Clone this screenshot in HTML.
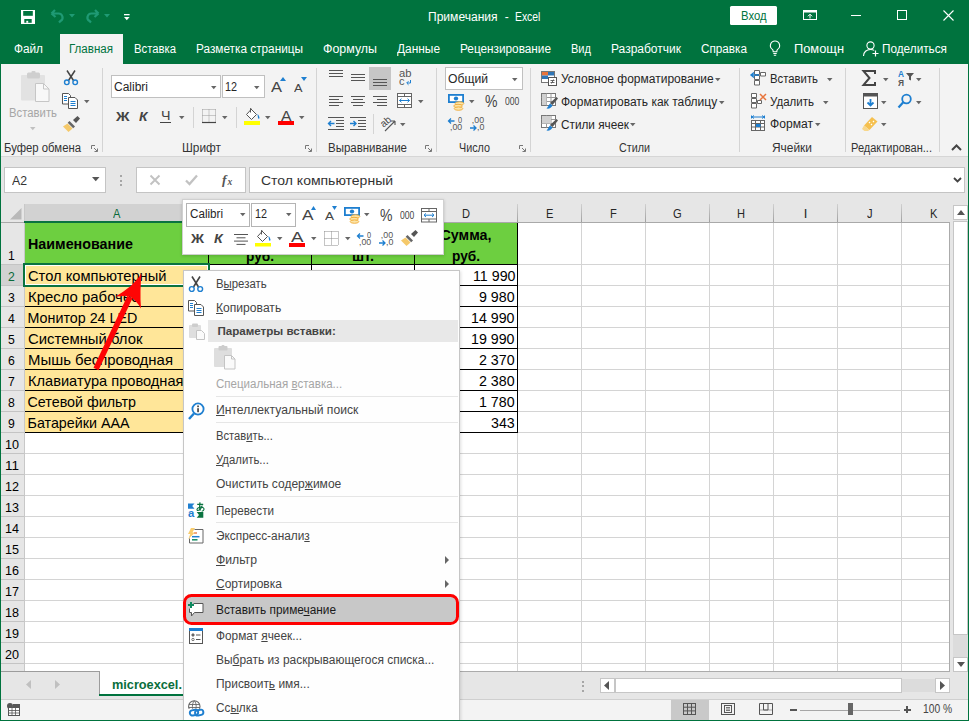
<!DOCTYPE html>
<html><head><meta charset="utf-8"><title>Excel</title>
<style>
html,body{margin:0;padding:0;}
body{width:969px;height:721px;overflow:hidden;position:relative;background:#e6e6e6;font-family:"Liberation Sans",sans-serif;}
#r{position:absolute;left:0;top:0;width:969px;height:721px;overflow:hidden;}
#r div,#r svg,#r span.t{position:absolute;}
#r svg{overflow:visible;}
span.t{white-space:pre;line-height:1;transform-origin:0 50%;}
span.t u{text-decoration:underline;text-underline-offset:1px;}
</style></head><body><div id="r">
<div style="left:0px;top:0px;width:969px;height:64px;background:#00733e;"></div>
<svg style="left:21px;top:10px;" width="14" height="14" viewBox="0 0 14 14"><rect x="0" y="0" width="14" height="14" fill="#fff"/><rect x="2.200" y="1" width="9.600" height="4.800" fill="#00733e"/><rect x="3.300" y="9" width="7.400" height="3.800" fill="#00733e"/><rect x="5.300" y="10.800" width="1.900" height="2" fill="#fff"/></svg>
<svg style="left:50px;top:9px;" width="16" height="15" viewBox="0 0 16 15"><path d="M1.500 4.500l3.500-3.500M1.500 4.500l4 3.500M2 4.500h6.500a4 4 0 0 1 2 7.500l-1.500 1.500" fill="none" stroke="#1f9a74" stroke-width="2.200"/></svg>
<svg style="left:69px;top:14px;" width="6" height="4" viewBox="0 0 6 4"><path d="M0 0h6l-3 3.5z" fill="#1f9a74"/></svg>
<svg style="left:84px;top:9px;" width="16" height="15" viewBox="0 0 16 15"><path d="M14.500 4.500l-3.500-3.500M14.500 4.500l-4 3.500M14 4.500h-6.500a4 4 0 0 0-2 7.500l1.500 1.500" fill="none" stroke="#1f9a74" stroke-width="2.200"/></svg>
<svg style="left:104px;top:14px;" width="6" height="4" viewBox="0 0 6 4"><path d="M0 0h6l-3 3.5z" fill="#1f9a74"/></svg>
<svg style="left:123.8px;top:13.7px;" width="5.6" height="6.5" viewBox="0 0 5.6 6.5"><rect x="0" y="0" width="5.600" height="1.300" fill="#fff"/><path d="M0 2.900h5.600l-2.800 3.300z" fill="#fff"/></svg>
<span class="t" style="left:427.70px;top:11.04px;font-size:12px;color:#fff;transform:scaleX(1.0046);">Примечания</span>
<span class="t" style="left:504.80px;top:11.04px;font-size:12px;color:#fff;">-</span>
<span class="t" style="left:515.00px;top:11.04px;font-size:12px;color:#fff;transform:scaleX(0.8656);">Excel</span>
<div style="left:730px;top:6px;width:47px;height:19px;background:#fff;border-radius:1.500px;"></div>
<span class="t" style="left:741.05px;top:9.50px;font-size:12.4px;color:#00733e;transform:scaleX(0.9090);">Вход</span>
<svg style="left:803px;top:10px;" width="14" height="10" viewBox="0 0 14 10"><rect x="0.5" y="0.5" width="13" height="9" fill="none" stroke="#fff"/><rect x="0.5" y="0.5" width="13" height="2" fill="#fff"/><path d="M7 4.5v4M4.900 6.300L7 4.200l2.100 2.100" fill="none" stroke="#fff" stroke-width="1"/></svg>
<div style="left:851px;top:15px;width:10px;height:1px;background:#fff;"></div>
<div style="left:897px;top:10px;width:10px;height:10px;background:transparent;border:1px solid #fff;box-sizing:border-box;"></div>
<svg style="left:942.5px;top:10px;" width="11" height="11" viewBox="0 0 11 11"><path d="M0.5 0.5l10 10M10.5 0.5l-10 10" stroke="#fff" stroke-width="1.1" fill="none"/></svg>
<div style="left:60px;top:34px;width:63px;height:31px;background:#f3f3f3;"></div>
<span class="t" style="left:14.00px;top:42.84px;font-size:12px;color:#fff;transform:scaleX(0.9830);">Файл</span>
<span class="t" style="left:69.00px;top:42.84px;font-size:12px;color:#00733e;transform:scaleX(0.9633);">Главная</span>
<span class="t" style="left:134.00px;top:42.84px;font-size:12px;color:#fff;transform:scaleX(0.9417);">Вставка</span>
<span class="t" style="left:196.00px;top:42.84px;font-size:12px;color:#fff;transform:scaleX(0.9829);">Разметка страницы</span>
<span class="t" style="left:323.00px;top:42.84px;font-size:12px;color:#fff;transform:scaleX(1.0341);">Формулы</span>
<span class="t" style="left:397.00px;top:42.84px;font-size:12px;color:#fff;transform:scaleX(0.9918);">Данные</span>
<span class="t" style="left:460.00px;top:42.84px;font-size:12px;color:#fff;transform:scaleX(0.9821);">Рецензирование</span>
<span class="t" style="left:571.00px;top:42.84px;font-size:12px;color:#fff;transform:scaleX(0.9213);">Вид</span>
<span class="t" style="left:611.00px;top:42.84px;font-size:12px;color:#fff;">Разработчик</span>
<span class="t" style="left:701.00px;top:42.84px;font-size:12px;color:#fff;transform:scaleX(0.9772);">Справка</span>
<span class="t" style="left:794.00px;top:42.84px;font-size:12px;color:#fff;transform:scaleX(1.0701);">Помощн</span>
<span class="t" style="left:882.00px;top:42.84px;font-size:12px;color:#fff;transform:scaleX(0.9809);">Поделиться</span>
<svg style="left:769px;top:40px;" width="12" height="17" viewBox="0 0 12 17"><path d="M6 1a4.6 4.6 0 0 1 2.6 8.4c-.6.5-.8 1.2-.8 2.3h-3.6c0-1.1-.2-1.8-.8-2.3a4.6 4.6 0 0 1 2.6-8.400z" fill="none" stroke="#fff" stroke-width="1.1"/><path d="M4.3 13.5h3.4M4.8 15.3h2.4" stroke="#fff" stroke-width="1.1"/></svg>
<svg style="left:862px;top:41px;" width="18" height="16" viewBox="0 0 18 16"><circle cx="8.5" cy="4.5" r="3.6" fill="none" stroke="#fff" stroke-width="1.1"/><path d="M1.5 15c0-4 3-6.500 7-6.500 1.500 0 2.700.3 3.700.9" fill="none" stroke="#fff" stroke-width="1.1"/><path d="M13.500 9.500v6M10.500 12.500h6" stroke="#fff" stroke-width="1.2"/></svg>
<div style="left:0px;top:64px;width:969px;height:92px;background:#f3f3f3;"></div>
<div style="left:0px;top:156px;width:969px;height:1px;background:#d6d6d6;"></div>
<svg style="left:21px;top:71px;" width="28" height="31" viewBox="0 0 28 31"><rect x="0" y="4" width="24" height="25.500" rx="1" fill="#e2e2e2"/><rect x="6" y="1.500" width="13" height="6" rx="1.500" fill="#cfcfcf"/><rect x="10.500" y="0" width="4" height="3" rx="1" fill="#cfcfcf"/><path d="M14.500 12.500h8l5.500 5.500v12.500h-13.500z" fill="#f8f8f8" stroke="#c6c6c6" stroke-width="1"/><path d="M22.500 12.500v5.500h5.500" fill="none" stroke="#c6c6c6"/></svg>
<span class="t" style="left:9.00px;top:106.84px;font-size:12px;color:#a6a6a6;transform:scaleX(0.9437);">Вставить</span>
<svg style="left:30.25px;top:126.7px;" width="5.5" height="3.2" viewBox="0 0 5.5 3.2"><path d="M0 0h5.500l-2.750 3.200z" fill="#c0c0c0"/></svg>
<svg style="left:63px;top:70px;" width="16" height="16" viewBox="0 0 16 16"><path d="M4 0.500l6.500 10M12 0.500l-6.500 10" stroke="#444" stroke-width="1.500" fill="none"/><circle cx="3.800" cy="12.300" r="2.300" fill="none" stroke="#1e7fd0" stroke-width="1.400"/><circle cx="12.200" cy="12.300" r="2.300" fill="none" stroke="#1e7fd0" stroke-width="1.400"/></svg>
<svg style="left:62px;top:93px;" width="17" height="16" viewBox="0 0 17 16"><path d="M0.500 0.500h6l2 2v8.500h-8z" fill="#fff" stroke="#555"/><path d="M6.500 4.500h6.500l2.500 2.500v8.500h-9z" fill="#fff" stroke="#555"/><path d="M2 3.500h3M2 5.500h3M2 7.500h3" stroke="#1e7fd0"/><path d="M8.500 8.500h5M8.500 10.500h5M8.500 12.500h5" stroke="#1e7fd0"/></svg>
<svg style="left:84.25px;top:99.7px;" width="5.5" height="3.2" viewBox="0 0 5.5 3.2"><path d="M0 0h5.500l-2.750 3.200z" fill="#666"/></svg>
<svg style="left:63px;top:116px;" width="17" height="16" viewBox="0 0 17 16"><path d="M10 4l4.500-4 2.500 2.500-4 4.500z" fill="#555"/><path d="M6.500 5l5.500 5.500-1.800 1.800-5.500-5.500z" fill="#666"/><path d="M4.500 7.500l5 5-4 3.500-5.500-5.500z" fill="#f5c96a"/></svg>
<span class="t" style="left:4.00px;top:141.84px;font-size:12px;color:#333;transform:scaleX(0.9443);">Буфер обмена</span>
<svg style="left:91px;top:145px;" width="7" height="7" viewBox="0 0 7 7"><path d="M0.500 4V0.500H4" fill="none" stroke="#777" stroke-width="1"/><path d="M3 3l3.200 3.200M6.500 3.500v3h-3" fill="none" stroke="#777" stroke-width="1"/></svg>
<div style="left:102px;top:68px;width:1px;height:84px;background:#d4d4d4;"></div>
<div style="left:111px;top:75px;width:110px;height:23px;background:#fff;border:1px solid #c0c0c0;box-sizing:border-box;"></div>
<span class="t" style="left:114.00px;top:80.84px;font-size:12px;color:#262626;">Calibri</span>
<svg style="left:211.25px;top:85.7px;" width="5.5" height="3.2" viewBox="0 0 5.5 3.2"><path d="M0 0h5.500l-2.750 3.200z" fill="#666"/></svg>
<div style="left:222px;top:75px;width:43px;height:23px;background:#fff;border:1px solid #c0c0c0;box-sizing:border-box;"></div>
<span class="t" style="left:225.00px;top:80.84px;font-size:12px;color:#262626;transform:scaleX(0.8990);">12</span>
<svg style="left:254.25px;top:85.7px;" width="5.5" height="3.2" viewBox="0 0 5.5 3.2"><path d="M0 0h5.500l-2.750 3.200z" fill="#666"/></svg>
<span class="t" style="left:271.00px;top:80.23px;font-size:14.5px;color:#444;transform:scaleX(1.1374);">A</span>
<svg style="left:280px;top:77px;" width="6" height="4" viewBox="0 0 6 4"><path d="M0 4h6l-3-4z" fill="#1e7fd0"/></svg>
<span class="t" style="left:293.50px;top:82.77px;font-size:11.5px;color:#444;transform:scaleX(1.1082);">A</span>
<svg style="left:301px;top:77px;" width="6" height="4" viewBox="0 0 6 4"><path d="M0 0h6l-3 4z" fill="#1e7fd0"/></svg>
<span class="t" style="left:115.50px;top:109.70px;font-size:13px;color:#444;font-weight:bold;transform:scaleX(1.1490);">Ж</span>
<span class="t" style="left:139.00px;top:109.70px;font-size:13px;color:#444;font-weight:bold;font-style:italic;transform:scaleX(1.0636);">К</span>
<span class="t" style="left:160.50px;top:109.20px;font-size:13px;color:#444;transform:scaleX(1.0964);">Ч</span>
<div style="left:160px;top:121.8px;width:11px;height:1px;background:#444;"></div>
<svg style="left:179.25px;top:116.2px;" width="5.5" height="3.2" viewBox="0 0 5.5 3.2"><path d="M0 0h5.500l-2.750 3.200z" fill="#666"/></svg>
<div style="left:193px;top:107px;width:1px;height:21px;background:#d4d4d4;"></div>
<svg style="left:201.5px;top:109px;" width="14" height="14" viewBox="0 0 14 14"><path d="M0.500 0.500h13M0.500 0.500v13M13.500 0.500v13M7 0.500v13M0.500 6.500h13" stroke="#9a9a9a" stroke-dasharray="1 1" fill="none"/><path d="M0 13.500h14" stroke="#444" stroke-width="1.200"/></svg>
<svg style="left:222.25px;top:116.2px;" width="5.5" height="3.2" viewBox="0 0 5.5 3.2"><path d="M0 0h5.500l-2.750 3.200z" fill="#666"/></svg>
<div style="left:236px;top:107px;width:1px;height:21px;background:#d4d4d4;"></div>
<svg style="left:244px;top:107px;" width="17" height="18" viewBox="0 0 17 18"><path d="M6.500 1.500l6 6-5 5-5-5 5-5.500z" fill="#fff" stroke="#555"/><path d="M6.500 1.500v4" stroke="#555"/><path d="M13.500 7c1.500 1.500 2 3 2 4 0 1-1.500 1-1.500 0 0-1-.500-2.500-.500-4z" fill="#1e7fd0"/><rect x="0" y="14" width="16" height="4" fill="#ffff00"/></svg>
<svg style="left:265.25px;top:116.2px;" width="5.5" height="3.2" viewBox="0 0 5.5 3.2"><path d="M0 0h5.500l-2.750 3.200z" fill="#666"/></svg>
<span class="t" style="left:281.00px;top:108.65px;font-size:14px;color:#444;transform:scaleX(1.1245);">A</span>
<div style="left:278px;top:121.3px;width:16px;height:3.7px;background:#f00;"></div>
<svg style="left:299.25px;top:116.2px;" width="5.5" height="3.2" viewBox="0 0 5.5 3.2"><path d="M0 0h5.500l-2.750 3.200z" fill="#666"/></svg>
<span class="t" style="left:182.00px;top:141.84px;font-size:12px;color:#333;transform:scaleX(0.9878);">Шрифт</span>
<svg style="left:305px;top:145px;" width="7" height="7" viewBox="0 0 7 7"><path d="M0.500 4V0.500H4" fill="none" stroke="#777" stroke-width="1"/><path d="M3 3l3.200 3.200M6.500 3.500v3h-3" fill="none" stroke="#777" stroke-width="1"/></svg>
<div style="left:316px;top:68px;width:1px;height:84px;background:#d4d4d4;"></div>
<svg style="left:329px;top:70px;" width="14" height="9" viewBox="0 0 14 9"><rect x="0" y="0" width="14" height="1" fill="#555"/><rect x="0" y="3" width="14" height="1" fill="#555"/><rect x="0" y="6" width="14" height="1" fill="#555"/></svg>
<svg style="left:351px;top:73.7px;" width="14" height="9" viewBox="0 0 14 9"><rect x="0" y="0" width="14" height="1" fill="#555"/><rect x="0" y="3" width="14" height="1" fill="#555"/><rect x="0" y="6" width="14" height="1" fill="#555"/></svg>
<div style="left:369px;top:67px;width:22px;height:23px;background:#c6c6c6;"></div>
<svg style="left:373px;top:78.5px;" width="14" height="9" viewBox="0 0 14 9"><rect x="0" y="0" width="14" height="1" fill="#555"/><rect x="0" y="3" width="14" height="1" fill="#555"/><rect x="0" y="6" width="14" height="1" fill="#555"/></svg>
<span class="t" style="left:398.50px;top:68.19px;font-size:11px;color:#555;transform:scaleX(1.0216);">ab</span>
<span class="t" style="left:399.00px;top:75.69px;font-size:11px;color:#555;">c</span>
<svg style="left:406px;top:80px;" width="5" height="5" viewBox="0 0 5 5"><path d="M4.500 0v3h-3.500M2.500 1.200l-1.800 1.800 1.800 1.800" fill="none" stroke="#1e7fd0" stroke-width="1"/></svg>
<svg style="left:329px;top:96px;" width="14" height="12" viewBox="0 0 14 12"><rect x="0" y="0" width="14" height="1" fill="#555"/><rect x="0" y="3" width="10" height="1" fill="#555"/><rect x="0" y="6" width="14" height="1" fill="#555"/><rect x="0" y="9" width="10" height="1" fill="#555"/></svg>
<svg style="left:351px;top:96px;" width="14" height="12" viewBox="0 0 14 12"><rect x="0.0" y="0" width="14" height="1" fill="#555"/><rect x="2.0" y="3" width="10" height="1" fill="#555"/><rect x="0.0" y="6" width="14" height="1" fill="#555"/><rect x="2.0" y="9" width="10" height="1" fill="#555"/></svg>
<svg style="left:373px;top:96px;" width="14" height="12" viewBox="0 0 14 12"><rect x="0" y="0" width="14" height="1" fill="#555"/><rect x="4" y="3" width="10" height="1" fill="#555"/><rect x="0" y="6" width="14" height="1" fill="#555"/><rect x="4" y="9" width="10" height="1" fill="#555"/></svg>
<svg style="left:397px;top:93px;" width="16" height="16" viewBox="0 0 16 16"><rect x="0.500" y="0.500" width="14" height="14" fill="#fff" stroke="#666"/><path d="M0.500 3.500h14M0.500 11.500h14M7.500 0.500v3M7.500 11.500v3" stroke="#666" fill="none"/><path d="M2.500 7.500h10M4.500 5.700l-2 1.800 2 1.800M10.500 5.700l2 1.800-2 1.800" stroke="#1e7fd0" stroke-width="1" fill="none"/></svg>
<svg style="left:418.25px;top:99.7px;" width="5.5" height="3.2" viewBox="0 0 5.5 3.2"><path d="M0 0h5.500l-2.750 3.200z" fill="#666"/></svg>
<svg style="left:328px;top:117px;" width="16" height="14" viewBox="0 0 16 14"><path d="M0 0.500h16M8 3.500h8M8 6.500h8M8 9.500h8M0 12.500h16" stroke="#555" fill="none"/><path d="M0.500 6.500h6M3 4l-2.500 2.500 2.500 2.500" stroke="#1e7fd0" stroke-width="1.400" fill="none"/></svg>
<svg style="left:350px;top:117px;" width="16" height="14" viewBox="0 0 16 14"><path d="M0 0.500h16M8 3.500h8M8 6.500h8M8 9.500h8M0 12.500h16" stroke="#555" fill="none"/><path d="M0 6.500h6M3.500 4l2.500 2.500-2.500 2.500" stroke="#1e7fd0" stroke-width="1.400" fill="none"/></svg>
<div style="left:373px;top:114px;width:1px;height:20px;background:#d4d4d4;"></div>
<svg style="left:380px;top:114px;" width="18" height="18" viewBox="0 0 18 18"><text x="1" y="11" font-size="10" font-family="Liberation Sans" fill="#444" transform="rotate(-40 6 9)">ab</text><path d="M5 17l10-10M15 7h-4M15 7v4" stroke="#555" stroke-width="1.100" fill="none"/></svg>
<svg style="left:400.25px;top:122.7px;" width="5.5" height="3.2" viewBox="0 0 5.5 3.2"><path d="M0 0h5.500l-2.750 3.200z" fill="#666"/></svg>
<span class="t" style="left:328.00px;top:141.84px;font-size:12px;color:#333;transform:scaleX(0.9564);">Выравнивание</span>
<svg style="left:425px;top:145px;" width="7" height="7" viewBox="0 0 7 7"><path d="M0.500 4V0.500H4" fill="none" stroke="#777" stroke-width="1"/><path d="M3 3l3.200 3.200M6.500 3.500v3h-3" fill="none" stroke="#777" stroke-width="1"/></svg>
<div style="left:436px;top:68px;width:1px;height:84px;background:#d4d4d4;"></div>
<div style="left:445px;top:67px;width:78px;height:23px;background:#fff;border:1px solid #c0c0c0;box-sizing:border-box;"></div>
<span class="t" style="left:448.00px;top:72.84px;font-size:12px;color:#262626;transform:scaleX(1.0130);">Общий</span>
<svg style="left:512.25px;top:77.7px;" width="5.5" height="3.2" viewBox="0 0 5.5 3.2"><path d="M0 0h5.500l-2.750 3.200z" fill="#666"/></svg>
<svg style="left:447.5px;top:93.5px;" width="17" height="17" viewBox="0 0 17 17"><rect x="0" y="0" width="16" height="9" fill="#1e7fd0"/><rect x="1.800" y="1.800" width="12.400" height="5.400" fill="#fff"/><ellipse cx="8" cy="4.500" rx="2.200" ry="1.900" fill="#1e7fd0"/><ellipse cx="11.500" cy="9.500" rx="4.300" ry="1.700" fill="#fbe4a8" stroke="#f0aa35" stroke-width=".9"/><ellipse cx="10" cy="12" rx="4.300" ry="1.700" fill="#fbe4a8" stroke="#f0aa35" stroke-width=".9"/><ellipse cx="10.500" cy="14.600" rx="4.300" ry="1.700" fill="#fbe4a8" stroke="#f0aa35" stroke-width=".9"/></svg>
<svg style="left:469.25px;top:99.7px;" width="5.5" height="3.2" viewBox="0 0 5.5 3.2"><path d="M0 0h5.500l-2.750 3.200z" fill="#666"/></svg>
<span class="t" style="left:484.50px;top:93.03px;font-size:16.5px;color:#444;transform:scaleX(0.8520);">%</span>
<span class="t" style="left:505.00px;top:96.53px;font-size:10px;color:#444;transform:scaleX(0.8570);">000</span>
<span class="t" style="left:458.20px;top:116.25px;font-size:8.8px;color:#555;transform:scaleX(0.8377);">0</span>
<span class="t" style="left:450.00px;top:122.95px;font-size:8.8px;color:#555;">,00</span>
<svg style="left:448px;top:117.5px;" width="7" height="6" viewBox="0 0 7 6"><path d="M0.500 3h6M3 0.500l-2.500 2.500 2.500 2.500" stroke="#1e7fd0" stroke-width="1.300" fill="none"/></svg>
<span class="t" style="left:471.80px;top:116.25px;font-size:8.8px;color:#555;">,00</span>
<span class="t" style="left:476.60px;top:122.95px;font-size:8.8px;color:#555;transform:scaleX(1.0083);">,0</span>
<svg style="left:470px;top:124.7px;" width="7" height="6" viewBox="0 0 7 6"><path d="M0 3h6M3.500 0.500l2.500 2.500-2.500 2.500" stroke="#1e7fd0" stroke-width="1.300" fill="none"/></svg>
<span class="t" style="left:459.00px;top:141.84px;font-size:12px;color:#333;transform:scaleX(0.8982);">Число</span>
<svg style="left:519px;top:145px;" width="7" height="7" viewBox="0 0 7 7"><path d="M0.500 4V0.500H4" fill="none" stroke="#777" stroke-width="1"/><path d="M3 3l3.200 3.200M6.500 3.500v3h-3" fill="none" stroke="#777" stroke-width="1"/></svg>
<div style="left:530px;top:68px;width:1px;height:84px;background:#d4d4d4;"></div>
<svg style="left:541px;top:71px;" width="17" height="16" viewBox="0 0 17 16"><rect x="0.500" y="0.500" width="13" height="11" fill="#fff" stroke="#777"/><rect x="1" y="1" width="6" height="3.500" fill="#e8743b"/><rect x="7" y="1" width="6" height="3.500" fill="#2e75b6"/><rect x="1" y="4.500" width="6" height="3.500" fill="#2e75b6"/><rect x="7.500" y="6.500" width="8" height="8" fill="#fff" stroke="#555"/><path d="M9.500 9.500h4M9.500 11.500h4M12.500 8.500l-2 4" stroke="#555" stroke-width=".9"/></svg>
<span class="t" style="left:561.00px;top:73.34px;font-size:12px;color:#262626;">Условное форматирование</span>
<svg style="left:715.25px;top:77.7px;" width="5.5" height="3.2" viewBox="0 0 5.5 3.2"><path d="M0 0h5.500l-2.750 3.200z" fill="#666"/></svg>
<svg style="left:541px;top:93px;" width="17" height="17" viewBox="0 0 17 17"><rect x="0.500" y="0.500" width="14" height="12" fill="#fff" stroke="#777"/><path d="M0.500 4.500h14M0.500 8.500h14M5.500 0.500v12M10 0.500v12" stroke="#999" fill="none"/><rect x="1" y="1" width="4.500" height="11" fill="#d0d0d0"/><path d="M15.500 4l1.500 1.500-5.500 6.500-2.500-2z" fill="#555"/><path d="M9 10.500l2.500 2c-1 2.500-3.500 3.500-6 3 1.500-1 1.500-3 3.500-5z" fill="#1e7fd0"/></svg>
<span class="t" style="left:561.00px;top:95.84px;font-size:12px;color:#262626;">Форматировать как таблицу</span>
<svg style="left:719.25px;top:100.7px;" width="5.5" height="3.2" viewBox="0 0 5.5 3.2"><path d="M0 0h5.500l-2.750 3.200z" fill="#666"/></svg>
<svg style="left:541px;top:115px;" width="17" height="17" viewBox="0 0 17 17"><rect x="0.500" y="0.500" width="14" height="12" fill="#fff" stroke="#777"/><path d="M0.500 4.500h14M0.500 8.500h14M5.500 0.500v12M10 0.500v12" stroke="#999" fill="none"/><rect x="1" y="1" width="9" height="7.500" fill="#d0d0d0"/><path d="M15.500 4l1.500 1.500-5.500 6.500-2.500-2z" fill="#555"/><path d="M9 10.500l2.500 2c-1 2.500-3.500 3.500-6 3 1.500-1 1.500-3 3.500-5z" fill="#1e7fd0"/></svg>
<span class="t" style="left:561.00px;top:119.04px;font-size:12px;color:#262626;transform:scaleX(0.9819);">Стили ячеек</span>
<svg style="left:630.25px;top:122.7px;" width="5.5" height="3.2" viewBox="0 0 5.5 3.2"><path d="M0 0h5.500l-2.750 3.200z" fill="#666"/></svg>
<span class="t" style="left:619.00px;top:141.84px;font-size:12px;color:#333;transform:scaleX(0.8967);">Стили</span>
<div style="left:739px;top:68px;width:1px;height:84px;background:#d4d4d4;"></div>
<svg style="left:750px;top:70px;" width="17" height="16" viewBox="0 0 17 16"><path d="M4.500 0.500h5v4h-5zM4.500 10.500h5v4.500h-5zM4.500 5.500h5v4h-5z" fill="#fff" stroke="#666"/><path d="M10.500 2.500h5v3.500h-5z" fill="#fff" stroke="#666"/><path d="M1 5h8M4 2.500l-3 2.500 3 2.500" stroke="#1e7fd0" stroke-width="1.400" fill="none"/></svg>
<span class="t" style="left:770.00px;top:73.34px;font-size:12px;color:#262626;transform:scaleX(0.9437);">Вставить</span>
<svg style="left:827.25px;top:77.7px;" width="5.5" height="3.2" viewBox="0 0 5.5 3.2"><path d="M0 0h5.500l-2.750 3.200z" fill="#666"/></svg>
<svg style="left:750px;top:93px;" width="17" height="16" viewBox="0 0 17 16"><path d="M1.500 0.500h5v4h-5zM1.500 10.500h5v4.500h-5zM1.500 5.500h5v4h-5z" fill="#fff" stroke="#666"/><path d="M7.500 7.500h4v3h-4z" fill="#fff" stroke="#666"/><path d="M10 1l6 6M16 1l-6 6" stroke="#e8743b" stroke-width="1.500"/></svg>
<span class="t" style="left:770.00px;top:95.84px;font-size:12px;color:#262626;transform:scaleX(0.9604);">Удалить</span>
<svg style="left:823.25px;top:100.7px;" width="5.5" height="3.2" viewBox="0 0 5.5 3.2"><path d="M0 0h5.500l-2.750 3.200z" fill="#666"/></svg>
<svg style="left:750px;top:115px;" width="17" height="17" viewBox="0 0 17 17"><path d="M1.500 0.500v3M14.500 0.500v3M1.500 2h13M4 0.500l-2 1.500 2 1.500M12 0.500l2 1.500-2 1.500" stroke="#1e7fd0" fill="none"/><rect x="1.500" y="5.500" width="13" height="10" fill="#fff" stroke="#666"/><path d="M1.500 8.500h13M1.500 12h13M5.500 5.500v10M10.500 5.500v10" stroke="#666" fill="none"/><rect x="6" y="9" width="4.500" height="3" fill="#1e7fd0"/></svg>
<span class="t" style="left:770.00px;top:118.34px;font-size:12px;color:#262626;transform:scaleX(1.0087);">Формат</span>
<svg style="left:815.25px;top:122.7px;" width="5.5" height="3.2" viewBox="0 0 5.5 3.2"><path d="M0 0h5.500l-2.750 3.200z" fill="#666"/></svg>
<span class="t" style="left:772.00px;top:141.84px;font-size:12px;color:#333;transform:scaleX(0.9938);">Ячейки</span>
<div style="left:845px;top:68px;width:1px;height:84px;background:#d4d4d4;"></div>
<svg style="left:862px;top:70px;" width="14" height="16" viewBox="0 0 14 16"><path d="M13 4v-3h-11.500l6 7-6 7h11.500v-3" fill="none" stroke="#444" stroke-width="2"/></svg>
<svg style="left:883.25px;top:77.7px;" width="5.5" height="3.2" viewBox="0 0 5.5 3.2"><path d="M0 0h5.500l-2.750 3.200z" fill="#666"/></svg>
<span class="t" style="left:898.00px;top:70.30px;font-size:8.5px;color:#1e7fd0;font-weight:bold;transform:scaleX(0.9774);">A</span>
<span class="t" style="left:898.00px;top:79.30px;font-size:8.5px;color:#555;font-weight:bold;transform:scaleX(0.9821);">Я</span>
<svg style="left:906px;top:73px;" width="8" height="8" viewBox="0 0 8 8"><path d="M0 0h8l-3 3.500v4l-2-1v-3z" fill="#555"/></svg>
<svg style="left:916.25px;top:77.7px;" width="5.5" height="3.2" viewBox="0 0 5.5 3.2"><path d="M0 0h5.500l-2.750 3.200z" fill="#666"/></svg>
<svg style="left:863px;top:93px;" width="15" height="16" viewBox="0 0 15 16"><rect x="0.500" y="0.500" width="14" height="15" fill="#fff" stroke="#555"/><rect x="0.500" y="0.500" width="14" height="3" fill="#555"/><path d="M7.500 6v6.500M4.500 9.500l3 3 3-3" stroke="#1e7fd0" stroke-width="1.800" fill="none"/></svg>
<svg style="left:881.25px;top:100.7px;" width="5.5" height="3.2" viewBox="0 0 5.5 3.2"><path d="M0 0h5.500l-2.750 3.200z" fill="#666"/></svg>
<svg style="left:897px;top:93px;" width="16" height="16" viewBox="0 0 16 16"><circle cx="9.500" cy="6" r="4.300" fill="none" stroke="#1e7fd0" stroke-width="1.800"/><path d="M6.500 9l-5 5.500" stroke="#1e7fd0" stroke-width="2.200"/></svg>
<svg style="left:916.25px;top:100.7px;" width="5.5" height="3.2" viewBox="0 0 5.5 3.2"><path d="M0 0h5.500l-2.750 3.200z" fill="#666"/></svg>
<svg style="left:861px;top:116px;" width="18" height="15" viewBox="0 0 18 15"><path d="M11 1l5.500 4.500-8 8.500-5.500-4.500z" fill="#f5c04f"/><path d="M3 9.500l5.500 4.500-1.500 1h-3.500l-2.500-2z" fill="#f8d78a"/><path d="M8 6l1 1M10 8l1 1M12 5l1 1" stroke="#fff" stroke-width="1.200"/></svg>
<svg style="left:881.25px;top:122.7px;" width="5.5" height="3.2" viewBox="0 0 5.5 3.2"><path d="M0 0h5.500l-2.750 3.200z" fill="#666"/></svg>
<span class="t" style="left:851.00px;top:141.84px;font-size:12px;color:#333;transform:scaleX(0.9200);">Редактирован...</span>
<div style="left:939px;top:68px;width:1px;height:84px;background:#d4d4d4;"></div>
<svg style="left:951px;top:144px;" width="11" height="7" viewBox="0 0 11 7"><path d="M1 6l4.500-4.500 4.500 4.500" fill="none" stroke="#444" stroke-width="2"/></svg>
<div style="left:4px;top:167px;width:102px;height:26px;background:#fff;border:1px solid #c4c4c4;box-sizing:border-box;"></div>
<span class="t" style="left:12.00px;top:174.84px;font-size:12px;color:#333;transform:scaleX(1.0219);">A2</span>
<svg style="left:92px;top:177px;" width="7.5" height="4.3" viewBox="0 0 7.5 4.3"><path d="M0 0h7.500l-3.750 4.300z" fill="#555"/></svg>
<div style="left:120px;top:175px;width:2px;height:2px;background:#a6a6a6;"></div>
<div style="left:120px;top:179.5px;width:2px;height:2px;background:#a6a6a6;"></div>
<div style="left:120px;top:184px;width:2px;height:2px;background:#a6a6a6;"></div>
<div style="left:136px;top:167px;width:110px;height:26px;background:#fff;border:1px solid #c4c4c4;box-sizing:border-box;"></div>
<svg style="left:150px;top:175px;" width="10" height="10" viewBox="0 0 10 10"><path d="M0.500 0.500l9 9M9.500 0.500l-9 9" stroke="#c2c2c2" stroke-width="1.900"/></svg>
<svg style="left:185px;top:175px;" width="13" height="10" viewBox="0 0 13 10"><path d="M1 5.500l3.500 3.500 7.500-8.500" stroke="#c2c2c2" stroke-width="2.300" fill="none"/></svg>
<span class="t" style="left:222px;top:172.500px;font-family:'Liberation Serif',serif;font-style:italic;font-weight:bold;font-size:13.500px;color:#555;">f</span>
<span class="t" style="left:227.500px;top:177.500px;font-family:'Liberation Serif',serif;font-style:italic;font-weight:bold;font-size:9.500px;color:#555;">x</span>
<div style="left:249px;top:167px;width:716px;height:26px;background:#fff;border:1px solid #c4c4c4;box-sizing:border-box;"></div>
<span class="t" style="left:261.00px;top:174.84px;font-size:12px;color:#333;transform:scaleX(1.1657);">Стол компьютерный</span>
<svg style="left:953px;top:176.5px;" width="9" height="6" viewBox="0 0 9 6"><path d="M1 1l3.500 3.500 3.500-3.500" fill="none" stroke="#444" stroke-width="1.900"/></svg>
<div style="left:25px;top:223px;width:926px;height:448px;background:#fff;"></div>
<div style="left:1px;top:204px;width:949px;height:18px;background:#e6e6e6;"></div>
<div style="left:1px;top:222px;width:23px;height:449px;background:#e6e6e6;"></div>
<svg style="left:10px;top:207.5px;" width="11.5" height="11.5" viewBox="0 0 11.5 11.5"><path d="M11.500 0v11.500h-11.500z" fill="#b9b9b9"/></svg>
<div style="left:24px;top:204px;width:1px;height:467px;background:#c8c8c8;"></div>
<div style="left:1px;top:222px;width:949px;height:1px;background:#a9a9a9;"></div>
<div style="left:25px;top:203.5px;width:183px;height:18px;background:#d2d2d2;"></div>
<div style="left:24px;top:221px;width:185px;height:2px;background:#0a7340;"></div>
<div style="left:1px;top:265px;width:22px;height:20px;background:#d2d2d2;"></div>
<span class="t" style="left:112.79px;top:206.91px;font-size:13.1px;color:#0a6a3a;transform:scaleX(0.8500);">A</span>
<div style="left:208px;top:204px;width:1px;height:18px;background:linear-gradient(#d0d0d0,#a0a0a0);"></div>
<span class="t" style="left:256.29px;top:206.91px;font-size:13.1px;color:#262626;transform:scaleX(0.8500);">B</span>
<div style="left:311px;top:204px;width:1px;height:18px;background:linear-gradient(#d0d0d0,#a0a0a0);"></div>
<span class="t" style="left:358.98px;top:206.91px;font-size:13.1px;color:#262626;transform:scaleX(0.8500);">C</span>
<div style="left:414px;top:204px;width:1px;height:18px;background:linear-gradient(#d0d0d0,#a0a0a0);"></div>
<span class="t" style="left:461.98px;top:206.91px;font-size:13.1px;color:#262626;transform:scaleX(0.8500);">D</span>
<div style="left:517px;top:204px;width:1px;height:18px;background:linear-gradient(#d0d0d0,#a0a0a0);"></div>
<span class="t" style="left:545.79px;top:206.91px;font-size:13.1px;color:#262626;transform:scaleX(0.8500);">E</span>
<div style="left:581px;top:204px;width:1px;height:18px;background:linear-gradient(#d0d0d0,#a0a0a0);"></div>
<span class="t" style="left:610.10px;top:206.91px;font-size:13.1px;color:#262626;transform:scaleX(0.8500);">F</span>
<div style="left:645px;top:204px;width:1px;height:18px;background:linear-gradient(#d0d0d0,#a0a0a0);"></div>
<span class="t" style="left:673.17px;top:206.91px;font-size:13.1px;color:#262626;transform:scaleX(0.8500);">G</span>
<div style="left:709px;top:204px;width:1px;height:18px;background:linear-gradient(#d0d0d0,#a0a0a0);"></div>
<span class="t" style="left:737.48px;top:206.91px;font-size:13.1px;color:#262626;transform:scaleX(0.8500);">H</span>
<div style="left:773px;top:204px;width:1px;height:18px;background:linear-gradient(#d0d0d0,#a0a0a0);"></div>
<span class="t" style="left:803.68px;top:206.91px;font-size:13.1px;color:#262626;">I</span>
<div style="left:837px;top:204px;width:1px;height:18px;background:linear-gradient(#d0d0d0,#a0a0a0);"></div>
<span class="t" style="left:866.72px;top:206.91px;font-size:13.1px;color:#262626;transform:scaleX(0.8500);">J</span>
<div style="left:901px;top:204px;width:1px;height:18px;background:linear-gradient(#d0d0d0,#a0a0a0);"></div>
<span class="t" style="left:929.79px;top:206.91px;font-size:13.1px;color:#262626;transform:scaleX(0.8500);">K</span>
<div style="left:517px;top:223px;width:1px;height:448px;background:#d4d4d4;"></div>
<div style="left:581px;top:223px;width:1px;height:448px;background:#d4d4d4;"></div>
<div style="left:645px;top:223px;width:1px;height:448px;background:#d4d4d4;"></div>
<div style="left:709px;top:223px;width:1px;height:448px;background:#d4d4d4;"></div>
<div style="left:773px;top:223px;width:1px;height:448px;background:#d4d4d4;"></div>
<div style="left:837px;top:223px;width:1px;height:448px;background:#d4d4d4;"></div>
<div style="left:901px;top:223px;width:1px;height:448px;background:#d4d4d4;"></div>
<div style="left:208px;top:433px;width:1px;height:238px;background:#d4d4d4;"></div>
<div style="left:311px;top:433px;width:1px;height:238px;background:#d4d4d4;"></div>
<div style="left:414px;top:433px;width:1px;height:238px;background:#d4d4d4;"></div>
<div style="left:518px;top:264px;width:433px;height:1px;background:#d4d4d4;"></div>
<div style="left:518px;top:285px;width:433px;height:1px;background:#d4d4d4;"></div>
<div style="left:518px;top:306px;width:433px;height:1px;background:#d4d4d4;"></div>
<div style="left:518px;top:327px;width:433px;height:1px;background:#d4d4d4;"></div>
<div style="left:518px;top:348px;width:433px;height:1px;background:#d4d4d4;"></div>
<div style="left:518px;top:369px;width:433px;height:1px;background:#d4d4d4;"></div>
<div style="left:518px;top:390px;width:433px;height:1px;background:#d4d4d4;"></div>
<div style="left:518px;top:411px;width:433px;height:1px;background:#d4d4d4;"></div>
<div style="left:518px;top:432px;width:433px;height:1px;background:#d4d4d4;"></div>
<div style="left:25px;top:453px;width:926px;height:1px;background:#d4d4d4;"></div>
<div style="left:25px;top:474px;width:926px;height:1px;background:#d4d4d4;"></div>
<div style="left:25px;top:495px;width:926px;height:1px;background:#d4d4d4;"></div>
<div style="left:25px;top:516px;width:926px;height:1px;background:#d4d4d4;"></div>
<div style="left:25px;top:537px;width:926px;height:1px;background:#d4d4d4;"></div>
<div style="left:25px;top:558px;width:926px;height:1px;background:#d4d4d4;"></div>
<div style="left:25px;top:579px;width:926px;height:1px;background:#d4d4d4;"></div>
<div style="left:25px;top:600px;width:926px;height:1px;background:#d4d4d4;"></div>
<div style="left:25px;top:621px;width:926px;height:1px;background:#d4d4d4;"></div>
<div style="left:25px;top:642px;width:926px;height:1px;background:#d4d4d4;"></div>
<div style="left:25px;top:663px;width:926px;height:1px;background:#d4d4d4;"></div>
<span class="t" style="left:8.40px;top:248.94px;font-size:13.3px;color:#000;transform:scaleX(0.9193);">1</span>
<div style="left:1px;top:264px;width:23px;height:1px;background:#c4c4c4;"></div>
<span class="t" style="left:8.40px;top:269.94px;font-size:13.3px;color:#0a6a3a;transform:scaleX(0.9193);">2</span>
<div style="left:1px;top:285px;width:23px;height:1px;background:#c4c4c4;"></div>
<span class="t" style="left:8.40px;top:290.94px;font-size:13.3px;color:#000;transform:scaleX(0.9193);">3</span>
<div style="left:1px;top:306px;width:23px;height:1px;background:#c4c4c4;"></div>
<span class="t" style="left:8.40px;top:311.94px;font-size:13.3px;color:#000;transform:scaleX(0.9193);">4</span>
<div style="left:1px;top:327px;width:23px;height:1px;background:#c4c4c4;"></div>
<span class="t" style="left:8.40px;top:332.94px;font-size:13.3px;color:#000;transform:scaleX(0.9193);">5</span>
<div style="left:1px;top:348px;width:23px;height:1px;background:#c4c4c4;"></div>
<span class="t" style="left:8.40px;top:353.94px;font-size:13.3px;color:#000;transform:scaleX(0.9193);">6</span>
<div style="left:1px;top:369px;width:23px;height:1px;background:#c4c4c4;"></div>
<span class="t" style="left:8.40px;top:374.94px;font-size:13.3px;color:#000;transform:scaleX(0.9193);">7</span>
<div style="left:1px;top:390px;width:23px;height:1px;background:#c4c4c4;"></div>
<span class="t" style="left:8.40px;top:395.94px;font-size:13.3px;color:#000;transform:scaleX(0.9193);">8</span>
<div style="left:1px;top:411px;width:23px;height:1px;background:#c4c4c4;"></div>
<span class="t" style="left:8.40px;top:416.94px;font-size:13.3px;color:#000;transform:scaleX(0.9193);">9</span>
<div style="left:1px;top:432px;width:23px;height:1px;background:#c4c4c4;"></div>
<span class="t" style="left:4.90px;top:437.94px;font-size:13.3px;color:#000;transform:scaleX(0.9463);">10</span>
<div style="left:1px;top:453px;width:23px;height:1px;background:#c4c4c4;"></div>
<span class="t" style="left:4.90px;top:458.94px;font-size:13.3px;color:#000;transform:scaleX(1.0140);">11</span>
<div style="left:1px;top:474px;width:23px;height:1px;background:#c4c4c4;"></div>
<span class="t" style="left:4.90px;top:479.94px;font-size:13.3px;color:#000;transform:scaleX(0.9463);">12</span>
<div style="left:1px;top:495px;width:23px;height:1px;background:#c4c4c4;"></div>
<span class="t" style="left:4.90px;top:500.94px;font-size:13.3px;color:#000;transform:scaleX(0.9463);">13</span>
<div style="left:1px;top:516px;width:23px;height:1px;background:#c4c4c4;"></div>
<span class="t" style="left:4.90px;top:521.94px;font-size:13.3px;color:#000;transform:scaleX(0.9463);">14</span>
<div style="left:1px;top:537px;width:23px;height:1px;background:#c4c4c4;"></div>
<span class="t" style="left:4.90px;top:542.94px;font-size:13.3px;color:#000;transform:scaleX(0.9463);">15</span>
<div style="left:1px;top:558px;width:23px;height:1px;background:#c4c4c4;"></div>
<span class="t" style="left:4.90px;top:563.94px;font-size:13.3px;color:#000;transform:scaleX(0.9463);">16</span>
<div style="left:1px;top:579px;width:23px;height:1px;background:#c4c4c4;"></div>
<span class="t" style="left:4.90px;top:584.94px;font-size:13.3px;color:#000;transform:scaleX(0.9463);">17</span>
<div style="left:1px;top:600px;width:23px;height:1px;background:#c4c4c4;"></div>
<span class="t" style="left:4.90px;top:605.94px;font-size:13.3px;color:#000;transform:scaleX(0.9463);">18</span>
<div style="left:1px;top:621px;width:23px;height:1px;background:#c4c4c4;"></div>
<span class="t" style="left:4.90px;top:626.94px;font-size:13.3px;color:#000;transform:scaleX(0.9463);">19</span>
<div style="left:1px;top:642px;width:23px;height:1px;background:#c4c4c4;"></div>
<span class="t" style="left:4.90px;top:647.94px;font-size:13.3px;color:#000;transform:scaleX(0.9463);">20</span>
<div style="left:1px;top:663px;width:23px;height:1px;background:#c4c4c4;"></div>
<div style="left:25px;top:223px;width:493px;height:41px;background:#6dcf40;"></div>
<div style="left:25px;top:265px;width:183px;height:168px;background:#ffe699;"></div>
<div style="left:208px;top:223px;width:1px;height:210px;background:#000;"></div>
<div style="left:311px;top:223px;width:1px;height:210px;background:#000;"></div>
<div style="left:414px;top:223px;width:1px;height:210px;background:#000;"></div>
<div style="left:517px;top:223px;width:1px;height:210px;background:#000;"></div>
<div style="left:25px;top:264px;width:493px;height:1px;background:#000;"></div>
<div style="left:25px;top:285px;width:493px;height:1px;background:#000;"></div>
<div style="left:25px;top:306px;width:493px;height:1px;background:#000;"></div>
<div style="left:25px;top:327px;width:493px;height:1px;background:#000;"></div>
<div style="left:25px;top:348px;width:493px;height:1px;background:#000;"></div>
<div style="left:25px;top:369px;width:493px;height:1px;background:#000;"></div>
<div style="left:25px;top:390px;width:493px;height:1px;background:#000;"></div>
<div style="left:25px;top:411px;width:493px;height:1px;background:#000;"></div>
<div style="left:25px;top:432px;width:493px;height:1px;background:#000;"></div>
<span class="t" style="left:28.00px;top:236.90px;font-size:14.3px;color:#000;font-weight:bold;">Наименование</span>
<span class="t" style="left:440.50px;top:227.90px;font-size:14.3px;color:#000;font-weight:bold;">Сумма,</span>
<span class="t" style="left:452.00px;top:248.90px;font-size:14.3px;color:#000;font-weight:bold;transform:scaleX(0.9554);">руб.</span>
<span class="t" style="left:246.00px;top:248.90px;font-size:14.3px;color:#000;font-weight:bold;transform:scaleX(0.9554);">руб.</span>
<span class="t" style="left:352.00px;top:248.90px;font-size:14.3px;color:#000;font-weight:bold;transform:scaleX(1.0167);">шт.</span>
<span class="t" style="left:27.50px;top:268.90px;font-size:14.3px;color:#000;transform:scaleX(1.0264);">Стол компьютерный</span>
<span class="t" style="left:472.54px;top:268.90px;font-size:14.3px;color:#000;transform:scaleX(0.9950);">11 990</span>
<span class="t" style="left:27.50px;top:289.90px;font-size:14.3px;color:#000;transform:scaleX(1.0429);">Кресло рабочее</span>
<span class="t" style="left:479.39px;top:289.90px;font-size:14.3px;color:#000;transform:scaleX(0.9950);">9 980</span>
<span class="t" style="left:27.50px;top:310.90px;font-size:14.3px;color:#000;">Монитор 24 LED</span>
<span class="t" style="left:471.48px;top:310.90px;font-size:14.3px;color:#000;transform:scaleX(0.9950);">14 990</span>
<span class="t" style="left:27.50px;top:331.90px;font-size:14.3px;color:#000;transform:scaleX(1.0405);">Системный блок</span>
<span class="t" style="left:471.48px;top:331.90px;font-size:14.3px;color:#000;transform:scaleX(0.9950);">19 990</span>
<span class="t" style="left:27.50px;top:352.90px;font-size:14.3px;color:#000;transform:scaleX(1.0440);">Мышь беспроводная</span>
<span class="t" style="left:479.39px;top:352.90px;font-size:14.3px;color:#000;transform:scaleX(0.9950);">2 370</span>
<span class="t" style="left:27.50px;top:373.90px;font-size:14.3px;color:#000;transform:scaleX(1.0224);">Клавиатура проводная</span>
<span class="t" style="left:479.39px;top:373.90px;font-size:14.3px;color:#000;transform:scaleX(0.9950);">2 380</span>
<span class="t" style="left:27.50px;top:394.90px;font-size:14.3px;color:#000;">Сетевой фильтр</span>
<span class="t" style="left:479.39px;top:394.90px;font-size:14.3px;color:#000;transform:scaleX(0.9950);">1 780</span>
<span class="t" style="left:27.50px;top:415.90px;font-size:14.3px;color:#000;">Батарейки ААА</span>
<span class="t" style="left:491.26px;top:415.90px;font-size:14.3px;color:#000;transform:scaleX(0.9950);">343</span>
<div style="left:23px;top:263px;width:187px;height:24px;background:#fff;"></div>
<div style="left:26px;top:266px;width:181px;height:18px;background:#ffe699;"></div>
<span class="t" style="left:27.50px;top:268.90px;font-size:14.3px;color:#000;transform:scaleX(1.0264);">Стол компьютерный</span>
<div style="left:23px;top:263px;width:187px;height:2px;background:#0a7340;"></div>
<div style="left:23px;top:285px;width:187px;height:2px;background:#0a7340;"></div>
<div style="left:23px;top:263px;width:2px;height:24px;background:#0a7340;"></div>
<div style="left:208px;top:263px;width:2px;height:24px;background:#0a7340;"></div>
<div style="left:950px;top:204px;width:18px;height:467px;background:#e6e6e6;"></div>
<div style="left:953px;top:205px;width:15px;height:15px;background:#fff;border:1px solid #c6c6c6;box-sizing:border-box;"></div>
<svg style="left:956.5px;top:210px;" width="8" height="5" viewBox="0 0 8 5"><path d="M0 5h8l-4-5z" fill="#555"/></svg>
<div style="left:953px;top:221px;width:15px;height:414px;background:#fff;border:1px solid #c6c6c6;box-sizing:border-box;"></div>
<div style="left:949px;top:222px;width:1px;height:450px;background:#ababab;"></div>
<div style="left:460px;top:671px;width:490px;height:1px;background:#ababab;"></div>
<div style="left:2px;top:671px;width:98px;height:28px;background:#e6e6e6;"></div>
<div style="left:100px;top:671px;width:360px;height:23px;background:#fff;"></div>
<div style="left:0px;top:671px;width:100px;height:1px;background:#9c9c9c;"></div>
<div style="left:99px;top:671px;width:1px;height:23px;background:#9c9c9c;"></div>
<div style="left:99px;top:694px;width:361px;height:2px;background:#00733e;"></div>
<svg style="left:26px;top:680px;" width="5" height="9" viewBox="0 0 5 9"><path d="M5 0v9l-5-4.500z" fill="#c0c0c0"/></svg>
<svg style="left:55px;top:680px;" width="5" height="9" viewBox="0 0 5 9"><path d="M0 0v9l5-4.500z" fill="#c0c0c0"/></svg>
<span class="t" style="left:111.50px;top:678.33px;font-size:13.2px;color:#0a6e3c;font-weight:bold;transform:scaleX(0.9636);">microexcel.</span>
<div style="left:582px;top:680.5px;width:2px;height:2px;background:#a6a6a6;"></div>
<div style="left:582px;top:685px;width:2px;height:2px;background:#a6a6a6;"></div>
<div style="left:582px;top:689.5px;width:2px;height:2px;background:#a6a6a6;"></div>
<div style="left:600px;top:678px;width:15px;height:15px;background:#fff;border:1px solid #c6c6c6;box-sizing:border-box;"></div>
<svg style="left:604px;top:681px;" width="5" height="9" viewBox="0 0 5 9"><path d="M5 0v9l-5-4.500z" fill="#555"/></svg>
<div style="left:615px;top:678px;width:287px;height:15px;background:#fff;border:1px solid #c6c6c6;box-sizing:border-box;"></div>
<div style="left:902px;top:679px;width:33px;height:13px;background:#dcdcdc;"></div>
<div style="left:935px;top:678px;width:15px;height:15px;background:#fff;border:1px solid #c6c6c6;box-sizing:border-box;"></div>
<svg style="left:940px;top:681px;" width="5" height="9" viewBox="0 0 5 9"><path d="M0 0v9l5-4.500z" fill="#555"/></svg>
<div style="left:953px;top:635px;width:15px;height:22px;background:#dcdcdc;"></div>
<div style="left:953px;top:634px;width:15px;height:1px;background:#c6c6c6;"></div>
<div style="left:953px;top:657px;width:15px;height:15px;background:#fff;border:1px solid #c6c6c6;box-sizing:border-box;"></div>
<svg style="left:956.5px;top:662px;" width="8" height="5" viewBox="0 0 8 5"><path d="M0 0h8l-4 5z" fill="#555"/></svg>
<div style="left:0px;top:699px;width:969px;height:22px;background:#f3f3f3;"></div>
<div style="left:0px;top:699px;width:969px;height:1px;background:#cfcfcf;"></div>
<svg style="left:7px;top:703px;" width="13" height="13" viewBox="0 0 13 13"><circle cx="3" cy="3" r="3" fill="#555"/><rect x="1.500" y="4.500" width="11" height="8" fill="#fff" stroke="#555"/><path d="M1.500 7.500h11M1.500 10h11M5 4.500v8M8.500 4.500v8" stroke="#555" stroke-width=".8"/><rect x="6" y="1" width="7" height="3" fill="#555"/></svg>
<div style="left:671px;top:700px;width:37.5px;height:20px;background:#c9c9c9;"></div>
<svg style="left:683px;top:703px;" width="13" height="12" viewBox="0 0 13 12"><rect x="0.500" y="0.500" width="12" height="11" fill="none" stroke="#555"/><path d="M0.500 4.200h12M0.500 7.900h12M4.500 0.500v11M8.500 0.500v11" stroke="#555" fill="none"/></svg>
<svg style="left:721px;top:703px;" width="14" height="12" viewBox="0 0 14 12"><rect x="0.500" y="0.500" width="13" height="11" fill="none" stroke="#555"/><rect x="3.500" y="2.500" width="7" height="7" fill="none" stroke="#555"/><path d="M5 4.500h4M5 6h4M5 7.500h4" stroke="#555" stroke-width=".8"/></svg>
<svg style="left:759px;top:703px;" width="14" height="12" viewBox="0 0 14 12"><path d="M0.500 0.500h13v11h-13z" fill="none" stroke="#555"/><path d="M4.500 0.500v6.500h4.500v-6.500" fill="none" stroke="#555"/><path d="M0.500 7h13" stroke="#555" stroke-dasharray="1 1"/></svg>
<div style="left:790px;top:709px;width:6.5px;height:1.8px;background:#555;"></div>
<div style="left:800px;top:709.5px;width:100px;height:1px;background:#a6a6a6;"></div>
<div style="left:848px;top:703px;width:5px;height:12px;background:#666;"></div>
<div style="left:903.5px;top:709px;width:7px;height:1.8px;background:#555;"></div>
<div style="left:906.1px;top:706.4px;width:1.8px;height:7px;background:#555;"></div>
<span class="t" style="left:922.50px;top:702.67px;font-size:12.2px;color:#444;transform:scaleX(0.8441);">100 %</span>
<div style="left:182px;top:199px;width:262px;height:55.5px;background:#fff;border:1px solid #d0d0d0;box-sizing:border-box;box-shadow:0 1px 3px rgba(0,0,0,.18);"></div>
<div style="left:186px;top:203px;width:64px;height:24px;background:#fff;border:1px solid #b4b4b4;box-sizing:border-box;"></div>
<span class="t" style="left:190.00px;top:207.84px;font-size:12px;color:#262626;transform:scaleX(0.9703);">Calibri</span>
<svg style="left:239.55px;top:212.7px;" width="5.5" height="3.2" viewBox="0 0 5.5 3.2"><path d="M0 0h5.500l-2.750 3.200z" fill="#666"/></svg>
<div style="left:250.5px;top:203px;width:45.5px;height:24px;background:#fff;border:1px solid #b4b4b4;box-sizing:border-box;"></div>
<span class="t" style="left:254.50px;top:207.84px;font-size:12px;color:#262626;transform:scaleX(0.8990);">12</span>
<svg style="left:285.85px;top:212.7px;" width="5.5" height="3.2" viewBox="0 0 5.5 3.2"><path d="M0 0h5.500l-2.750 3.200z" fill="#666"/></svg>
<span class="t" style="left:302.00px;top:208.23px;font-size:14.5px;color:#444;transform:scaleX(1.1891);">A</span>
<svg style="left:311px;top:206px;" width="5" height="4" viewBox="0 0 5 4"><path d="M0 4h5l-2.500-4z" fill="#1e7fd0"/></svg>
<span class="t" style="left:325.00px;top:210.77px;font-size:11.5px;color:#444;transform:scaleX(1.1733);">A</span>
<svg style="left:332px;top:206px;" width="5" height="4" viewBox="0 0 5 4"><path d="M0 0h5l-2.500 4z" fill="#1e7fd0"/></svg>
<svg style="left:343.5px;top:206.5px;" width="17" height="17" viewBox="0 0 17 17"><rect x="0" y="0" width="16" height="9" fill="#1e7fd0"/><rect x="1.800" y="1.800" width="12.400" height="5.400" fill="#fff"/><ellipse cx="8" cy="4.500" rx="2.200" ry="1.900" fill="#1e7fd0"/><ellipse cx="11.500" cy="9.500" rx="4.300" ry="1.700" fill="#fbe4a8" stroke="#f0aa35" stroke-width=".9"/><ellipse cx="10" cy="12" rx="4.300" ry="1.700" fill="#fbe4a8" stroke="#f0aa35" stroke-width=".9"/><ellipse cx="10.500" cy="14.600" rx="4.300" ry="1.700" fill="#fbe4a8" stroke="#f0aa35" stroke-width=".9"/></svg>
<svg style="left:364.25px;top:212.7px;" width="5.5" height="3.2" viewBox="0 0 5.5 3.2"><path d="M0 0h5.500l-2.750 3.200z" fill="#666"/></svg>
<span class="t" style="left:379.50px;top:207.03px;font-size:16.5px;color:#444;transform:scaleX(0.8520);">%</span>
<span class="t" style="left:400.00px;top:210.53px;font-size:10px;color:#444;transform:scaleX(0.8570);">000</span>
<svg style="left:420.5px;top:207.5px;" width="16" height="15" viewBox="0 0 16 15"><rect x="0.500" y="0.500" width="15" height="13.500" fill="#fff" stroke="#666"/><path d="M0.500 3.500h15M0.500 11h15M8 0.500v3M8 11v3" stroke="#666" fill="none"/><path d="M3 7.200h10M5 5.400l-2 1.800 2 1.800M11 5.400l2 1.800-2 1.800" stroke="#1e7fd0" stroke-width="1" fill="none"/></svg>
<span class="t" style="left:191.00px;top:232.40px;font-size:13px;color:#444;font-weight:bold;transform:scaleX(1.1064);">Ж</span>
<span class="t" style="left:214.00px;top:232.40px;font-size:13px;color:#444;font-weight:bold;font-style:italic;transform:scaleX(1.0886);">К</span>
<svg style="left:233.7px;top:233.5px;" width="14" height="13.2" viewBox="0 0 14 13.2"><rect x="0.0" y="0.0" width="14" height="1" fill="#555"/><rect x="2.5" y="3.3" width="9" height="1" fill="#555"/><rect x="0.0" y="6.6" width="14" height="1" fill="#555"/><rect x="2.5" y="9.899999999999999" width="9" height="1" fill="#555"/></svg>
<svg style="left:255px;top:229px;" width="17" height="18" viewBox="0 0 17 18"><path d="M6.500 1.500l6 6-5 5-5-5 5-5.500z" fill="#fff" stroke="#555"/><path d="M6.500 1.500v4" stroke="#555"/><path d="M13.500 7c1.500 1.500 2 3 2 4 0 1-1.500 1-1.500 0 0-1-.500-2.500-.500-4z" fill="#1e7fd0"/><rect x="0" y="14" width="16" height="3.500" fill="#ffff00"/></svg>
<svg style="left:276.85px;top:237.2px;" width="5.5" height="3.2" viewBox="0 0 5.5 3.2"><path d="M0 0h5.500l-2.750 3.200z" fill="#666"/></svg>
<span class="t" style="left:291.00px;top:229.30px;font-size:15px;color:#444;transform:scaleX(1.2494);">A</span>
<div style="left:289px;top:243px;width:16px;height:3.5px;background:#f00;"></div>
<svg style="left:310.95px;top:237.2px;" width="5.5" height="3.2" viewBox="0 0 5.5 3.2"><path d="M0 0h5.500l-2.750 3.200z" fill="#666"/></svg>
<svg style="left:323.8px;top:231px;" width="15" height="15" viewBox="0 0 15 15"><path d="M0.500 0.500h14M0.500 0.500v14M14.500 0.500v14M7.500 0.500v14M0.500 7.500h14M0.500 14.500h14" stroke="#8a8a8a" stroke-dasharray="1 1" fill="none"/></svg>
<svg style="left:344.75px;top:237.2px;" width="5.5" height="3.2" viewBox="0 0 5.5 3.2"><path d="M0 0h5.500l-2.750 3.200z" fill="#666"/></svg>
<span class="t" style="left:367.20px;top:231.25px;font-size:8.8px;color:#555;transform:scaleX(0.8377);">0</span>
<span class="t" style="left:359.00px;top:237.95px;font-size:8.8px;color:#555;">,00</span>
<svg style="left:357px;top:232.5px;" width="7" height="6" viewBox="0 0 7 6"><path d="M0.500 3h6M3 0.500l-2.500 2.500 2.500 2.500" stroke="#1e7fd0" stroke-width="1.300" fill="none"/></svg>
<span class="t" style="left:380.80px;top:231.25px;font-size:8.8px;color:#555;">,00</span>
<span class="t" style="left:385.60px;top:237.95px;font-size:8.8px;color:#555;transform:scaleX(1.0083);">,0</span>
<svg style="left:379px;top:239.7px;" width="7" height="6" viewBox="0 0 7 6"><path d="M0 3h6M3.500 0.500l2.500 2.500-2.500 2.500" stroke="#1e7fd0" stroke-width="1.300" fill="none"/></svg>
<svg style="left:400.5px;top:230px;" width="17" height="16" viewBox="0 0 17 16"><path d="M10 4l4.500-4 2.500 2.500-4 4.500z" fill="#555"/><path d="M6.500 5l5.500 5.500-1.800 1.800-5.500-5.500z" fill="#666"/><path d="M4.500 7.500l5 5-4 3.500-5.500-5.500z" fill="#f5c96a"/></svg>
<div style="left:183px;top:270px;width:277px;height:460px;background:#fefefe;border:1px solid #c6c6c6;box-sizing:border-box;box-shadow:1px 1px 3px rgba(0,0,0,.13);"></div>
<div style="left:208px;top:320px;width:250px;height:21.7px;background:#e8e8e8;"></div>
<span class="t" style="left:216.00px;top:278.44px;font-size:12px;color:#444;transform:scaleX(0.9480);">В<u>ы</u>резать</span>
<span class="t" style="left:216.00px;top:302.24px;font-size:12px;color:#444;transform:scaleX(1.0091);"><u>К</u>опировать</span>
<span class="t" style="left:217.40px;top:325.08px;font-size:11.6px;color:#444;font-weight:bold;">Параметры вставки:</span>
<span class="t" style="left:216.00px;top:378.44px;font-size:12px;color:#a6a6a6;transform:scaleX(0.9610);">Специальная <u>в</u>ставка...</span>
<div style="left:216px;top:396px;width:242px;height:1px;background:#e6e6e6;"></div>
<span class="t" style="left:216.00px;top:404.04px;font-size:12px;color:#444;transform:scaleX(1.0107);"><u>И</u>нтеллектуальный поиск</span>
<div style="left:216px;top:422px;width:242px;height:1px;background:#e6e6e6;"></div>
<span class="t" style="left:216.00px;top:429.74px;font-size:12px;color:#444;transform:scaleX(0.9332);">Встав<u>и</u>ть...</span>
<span class="t" style="left:216.00px;top:454.14px;font-size:12px;color:#444;transform:scaleX(0.9459);"><u>У</u>далить...</span>
<span class="t" style="left:216.00px;top:478.34px;font-size:12px;color:#444;transform:scaleX(1.0040);">Очистить содер<u>ж</u>имое</span>
<div style="left:216px;top:496px;width:242px;height:1px;background:#e6e6e6;"></div>
<span class="t" style="left:216.00px;top:504.64px;font-size:12px;color:#444;transform:scaleX(0.9705);">Перевести</span>
<div style="left:216px;top:522px;width:242px;height:1px;background:#e6e6e6;"></div>
<span class="t" style="left:216.00px;top:529.94px;font-size:12px;color:#444;transform:scaleX(0.9859);">Экспресс-анали<u>з</u></span>
<span class="t" style="left:216.00px;top:553.74px;font-size:12px;color:#444;transform:scaleX(1.0170);"><u>Ф</u>ильтр</span>
<span class="t" style="left:216.00px;top:577.94px;font-size:12px;color:#444;"><u>С</u>ортировка</span>
<svg style="left:445px;top:555.5px;" width="4" height="8" viewBox="0 0 4 8"><path d="M0 0v8l4-4z" fill="#666"/></svg>
<svg style="left:445px;top:579.5px;" width="4" height="8" viewBox="0 0 4 8"><path d="M0 0v8l4-4z" fill="#666"/></svg>
<div style="left:183px;top:594px;width:276.3px;height:31px;background:#c8c8c8;border:3px solid #fe0000;border-radius:8.500px;box-sizing:border-box;"></div>
<span class="t" style="left:216.00px;top:603.94px;font-size:12px;color:#1a1a1a;transform:scaleX(0.9874);">Вставить приме<u>ч</u>ание</span>
<span class="t" style="left:216.00px;top:630.14px;font-size:12px;color:#444;transform:scaleX(0.9850);">Формат <u>я</u>чеек...</span>
<span class="t" style="left:216.00px;top:653.74px;font-size:12px;color:#444;transform:scaleX(0.9952);">Вы<u>б</u>рать из раскрывающегося списка...</span>
<span class="t" style="left:216.00px;top:677.94px;font-size:12px;color:#444;transform:scaleX(0.9952);">Присвоит<u>ь</u> имя...</span>
<span class="t" style="left:216.00px;top:702.44px;font-size:12px;color:#444;transform:scaleX(0.9816);">Сс<u>ы</u>лка</span>
<svg style="left:188px;top:276px;" width="16" height="17" viewBox="0 0 16 17"><path d="M4 0.500l6.500 10.500M12 0.500l-6.500 10.500" stroke="#444" stroke-width="1.600" fill="none"/><circle cx="3.800" cy="13" r="2.400" fill="none" stroke="#1e7fd0" stroke-width="1.400"/><circle cx="12.200" cy="13" r="2.400" fill="none" stroke="#1e7fd0" stroke-width="1.400"/></svg>
<svg style="left:188px;top:300px;" width="17" height="16" viewBox="0 0 17 16"><path d="M0.500 0.500h6l2 2v8.500h-8z" fill="#fff" stroke="#555"/><path d="M6.500 4.500h6.500l2.500 2.500v8.500h-9z" fill="#fff" stroke="#555"/><path d="M2 3.500h3M2 5.500h3M2 7.500h3" stroke="#1e7fd0"/><path d="M8.500 8.500h5M8.500 10.500h5M8.500 12.500h5" stroke="#1e7fd0"/></svg>
<svg style="left:189px;top:323px;" width="16" height="17" viewBox="0 0 16 17"><rect x="0" y="2" width="12" height="13" rx="1" fill="#dedede"/><rect x="3" y="0.500" width="6" height="3.500" rx="1" fill="#cdcdcd"/><path d="M7.500 7.500h5l3 3v6h-8z" fill="#fafafa" stroke="#c4c4c4"/></svg>
<svg style="left:214px;top:345px;" width="22" height="25" viewBox="0 0 22 25"><rect x="0" y="3" width="18" height="19" rx="1" fill="#dedede"/><rect x="4.500" y="1" width="9" height="4.500" rx="1" fill="#cdcdcd"/><rect x="7.500" y="0" width="3" height="2" rx="1" fill="#cdcdcd"/><path d="M10.500 10.500h7l3.500 3.500v10h-10.500z" fill="#fafafa" stroke="#c4c4c4"/><path d="M17.500 10.500v3.500h3.500" fill="none" stroke="#c4c4c4"/></svg>
<svg style="left:188px;top:402px;" width="17" height="18" viewBox="0 0 17 18"><circle cx="10" cy="7" r="5.600" fill="#fff" stroke="#1e7fd0" stroke-width="1.800"/><path d="M6 11.500l-5 5.500" stroke="#1e7fd0" stroke-width="2.400"/><rect x="9.200" y="6.200" width="1.700" height="4" fill="#444"/><rect x="9.200" y="3.500" width="1.700" height="1.700" fill="#444"/></svg>
<svg style="left:188px;top:502px;" width="17" height="17" viewBox="0 0 17 17"><path d="M0 1.400h6.500l-2.300 2.700 2.300 2.700h-6.500z" fill="#1e7fd0"/><path d="M8.700 10h6.600v5.800h-6.600l2.300-2.900z" fill="#0a7340"/></svg>
<span class="t" style="left:188.00px;top:508.47px;font-size:11.5px;color:#1e7fd0;font-weight:bold;transform:scaleX(0.9850);">a</span>
<svg style="left:196px;top:502px;" width="9" height="10" viewBox="0 0 9 10"><path d="M1.200 2.300h6M4 0.300c-.4 3-.5 5.800.2 8.300" fill="none" stroke="#0a7340" stroke-width="1.300"/><path d="M6.300 3.500c-1 3-2.800 4.800-4.300 5-1.500.2-1.500-2.500 1.500-3.300 2.600-.7 4.800.5 4.500 2.200-.2 1-1.200 1.600-2.300 1.800" fill="none" stroke="#0a7340" stroke-width="1.100"/></svg>
<svg style="left:188px;top:528px;" width="17" height="17" viewBox="0 0 17 17"><path d="M6.500 1.500h8.500v13.500h-13.500v-4.500" fill="#fff" stroke="#666" stroke-width="1"/><path d="M6 5h3" stroke="#e8743b" stroke-width="1.300"/><path d="M4 8.700h7.500" stroke="#1e7fd0" stroke-width="1.500"/><path d="M4 11.800h5.500" stroke="#0f8a5f" stroke-width="1.500"/><path d="M3 0h4l-2.600 4.500h2.600l-6.800 6.700 2.100-5.200h-2.300z" fill="#f8cd6f"/></svg>
<svg style="left:188px;top:602px;" width="16" height="15" viewBox="0 0 16 15"><path d="M5.500 1.500h9.500v9h-8.500l-3 3.500v-3.500h-2v-4" fill="#fff" stroke="#555" stroke-width="1"/><path d="M3 0v6M0 3h6" stroke="#0f8a5f" stroke-width="2"/></svg>
<svg style="left:189px;top:628px;" width="14" height="16" viewBox="0 0 14 16"><rect x="0.500" y="0.500" width="13" height="15" fill="#fff" stroke="#555"/><rect x="0" y="0" width="14" height="3" fill="#1e7fd0"/><circle cx="4" cy="7" r="1.200" fill="#777" stroke="#555" stroke-width=".8"/><circle cx="4" cy="11.500" r="1.200" fill="none" stroke="#555" stroke-width=".8"/><path d="M7 7h4.500M7 11.500h4.500" stroke="#555"/></svg>
<svg style="left:188px;top:700px;" width="17" height="18" viewBox="0 0 17 18"><circle cx="6.300" cy="6.500" r="5.700" fill="none" stroke="#666" stroke-width="1.100"/><path d="M1 4.500h10.600M0.600 7.500h11.400M6.300 0.800c-2.500 2.500-2.500 8.500 0 11.400M6.300 0.800c2.500 2.500 2.500 8.500 0 11.400" fill="none" stroke="#666" stroke-width=".9"/><rect x="0" y="8.800" width="17" height="9.200" fill="#fefefe"/><rect x="1.800" y="10" width="8.400" height="5.200" rx="2.600" fill="none" stroke="#1e7fd0" stroke-width="1.900" transform="rotate(-12 6 12.600)"/><rect x="7" y="10" width="8.400" height="5.200" rx="2.600" fill="none" stroke="#1e7fd0" stroke-width="1.900" transform="rotate(-12 11.200 12.600)"/></svg>
<svg style="left:0;top:0" width="969" height="721" viewBox="0 0 969 721"><path d="M96 369L130 297" stroke="#fe0505" stroke-width="5.500" fill="none"/><path d="M141.500 273.500C135 283 127 290 115.500 296.500C121 296 126 295.500 130 296.500C134 299 138 303 141 308.500C140 296 140.500 285 141.500 273.500z" fill="#fe0505"/></svg>
<div style="left:0px;top:0px;width:1px;height:721px;background:#00733e;"></div>
<div style="left:968px;top:0px;width:1px;height:721px;background:#00733e;"></div>
<div style="left:0px;top:719.7px;width:969px;height:1.3px;background:#00733e;"></div>
</div></body></html>
